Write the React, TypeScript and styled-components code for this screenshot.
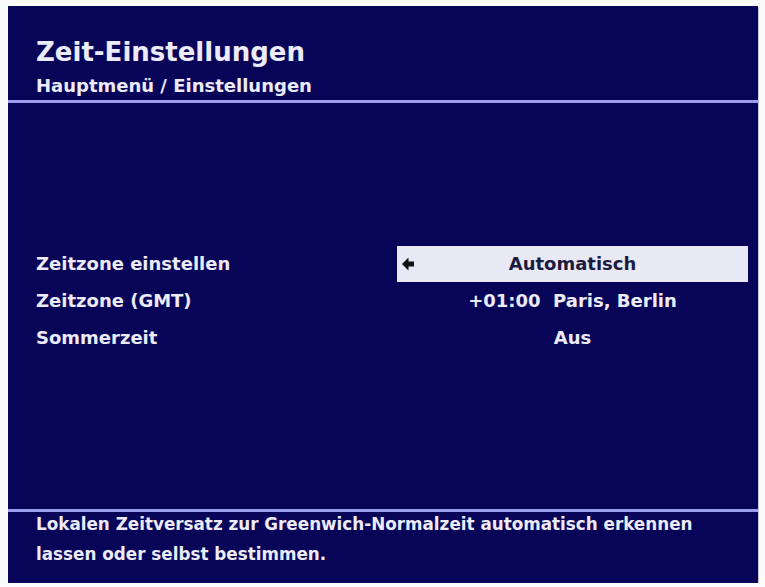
import React from 'react';
import styled, { createGlobalStyle } from 'styled-components';

const GlobalStyle = createGlobalStyle`
  html, body {
    margin: 0;
    padding: 0;
    background: #fbfbfd;
  }
  body {
    font-family: "DejaVu Sans", "Open Sans", sans-serif;
  }
`

const Screen = styled.div`
  width: 750px;
  height: 577px;
  margin: 6px 0 0 8px;
  background: #080559;
  display: flex;
  flex-direction: column;
  color: #ecebfa;
  box-shadow: 1px 1px 0 #c9c9dc;
`

const Header = styled.div`
  height: 94px;
  padding: 29px 0 0 28px;
  box-sizing: border-box;
`

const Title = styled.h1`
  margin: 0;
  font-size: 26px;
  font-weight: 700;
  line-height: 34px;
`

const Breadcrumb = styled.div`
  font-size: 18px;
  font-weight: 700;
  line-height: 22px;
  margin-top: 6px;
`

const Divider = styled.div`
  height: 3px;
  flex-shrink: 0;
  background: #9c9cec;
`

const Content = styled.div`
  flex: 1;
  display: flex;
  flex-direction: column;
  justify-content: flex-start;
  padding: 142px 10px 0 28px;
`

const Row = styled.div`
  display: grid;
  grid-template-columns: 361px 351px;
  height: 37px;
  align-items: center;
`

const Label = styled.div`
  font-size: 18px;
  font-weight: 700;
`

const Value = styled.div<{ selected?: boolean }>`
  position: relative;
  height: 36px;
  display: flex;
  align-items: center;
  justify-content: center;
  font-size: 18px;
  font-weight: 600;
  white-space: pre;
  background: ${({ selected }) => (selected ? '#e8e9f5' : 'transparent')};
  color: ${({ selected }) => (selected ? '#1c1b3e' : '#ecebfa')};
`

const Arrow = styled.svg`
  position: absolute;
  left: 5px;
  top: 11px;
`

const Footer = styled.div`
  height: 71px;
  flex-shrink: 0;
  padding: 2px 0 0 28px;
  box-sizing: border-box;
  display: flex;
  flex-direction: column;
  gap: 10px;
`

const FooterLine = styled.div`
  font-size: 16.8px;
  font-weight: 700;
  line-height: 20px;
`

const rows = [
    { label: 'Zeitzone einstellen', value: 'Automatisch', selected: true },
    { label: 'Zeitzone (GMT)', value: '+01:00  Paris, Berlin' },
    { label: 'Sommerzeit', value: 'Aus' },
]

const App = () => {
    return (
        <>
            <GlobalStyle />
            <Screen>
                <Header>
                    <Title>Zeit-Einstellungen</Title>
                    <Breadcrumb>Hauptmenü / Einstellungen</Breadcrumb>
                </Header>
                <Divider />
                <Content>
                    {rows.map((row) => (
                        <Row key={row.label}>
                            <Label>{row.label}</Label>
                            <Value selected={row.selected}>
                                {row.selected && (
                                    <Arrow width="12" height="14" viewBox="0 0 12 14">
                                        <path d="M0 7 L6.5 0.5 L6.5 4.5 L12 4.5 L12 9.5 L6.5 9.5 L6.5 13.5 Z" fill="#111" />
                                    </Arrow>
                                )}
                                {row.value}
                            </Value>
                        </Row>
                    ))}
                </Content>
                <Divider />
                <Footer>
                    <FooterLine>Lokalen Zeitversatz zur Greenwich-Normalzeit automatisch erkennen</FooterLine>
                    <FooterLine>lassen oder selbst bestimmen.</FooterLine>
                </Footer>
            </Screen>
        </>
    )
}

export default App;
